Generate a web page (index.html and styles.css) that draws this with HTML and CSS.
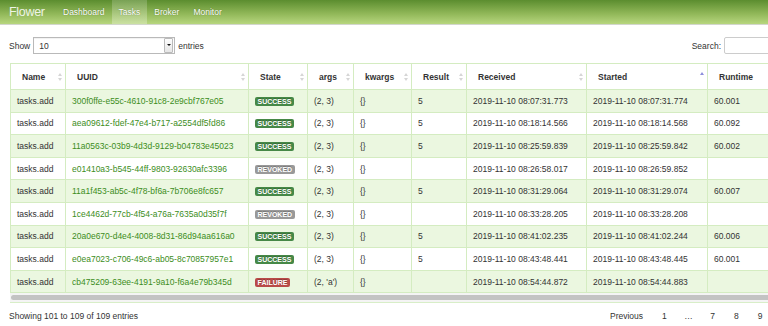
FILE: index.html
```html
<!DOCTYPE html>
<html>
<head>
  <title>Flower - Tasks</title>
  <link rel="stylesheet" href="styles.css">
</head>
<body>
  <div class="navbar">
    <span class="brand">Flower</span>
    <a class="nav-item">Dashboard</a>
    <a class="nav-item active">Tasks</a>
    <a class="nav-item">Broker</a>
    <a class="nav-item">Monitor</a>
  </div>

  <div class="page">
    <div class="controls">
      <div class="length">
        Show
        <span class="select"><span class="select-value">10</span><span class="select-arrow"></span></span>
        entries
      </div>
      <div class="search">
        Search:
        <span class="search-input"></span>
      </div>
    </div>

    <div class="table-wrap">
      <table class="tasks">
        <colgroup>
          <col style="width:55px">
          <col style="width:183px">
          <col style="width:59px">
          <col style="width:46px">
          <col style="width:58px">
          <col style="width:55px">
          <col style="width:120px">
          <col style="width:121px">
          <col style="width:108px">
        </colgroup>
        <thead>
          <tr>
            <th>Name<span class="sort"></span></th>
            <th>UUID<span class="sort"></span></th>
            <th>State<span class="sort"></span></th>
            <th>args<span class="sort"></span></th>
            <th>kwargs<span class="sort"></span></th>
            <th>Result<span class="sort"></span></th>
            <th>Received<span class="sort"></span></th>
            <th>Started<span class="sort asc"></span></th>
            <th>Runtime<span class="sort"></span></th>
          </tr>
        </thead>
        <tbody>
          <tr>
            <td>tasks.add</td>
            <td><a class="uuid">300f0ffe-e55c-4610-91c8-2e9cbf767e05</a></td>
            <td><span class="label success">SUCCESS</span></td>
            <td>(2, 3)</td><td>{}</td><td>5</td>
            <td>2019-11-10 08:07:31.773</td><td>2019-11-10 08:07:31.774</td><td>60.001</td>
          </tr>
          <tr>
            <td>tasks.add</td>
            <td><a class="uuid">aea09612-fdef-47e4-b717-a2554df5fd86</a></td>
            <td><span class="label success">SUCCESS</span></td>
            <td>(2, 3)</td><td>{}</td><td>5</td>
            <td>2019-11-10 08:18:14.566</td><td>2019-11-10 08:18:14.568</td><td>60.092</td>
          </tr>
          <tr>
            <td>tasks.add</td>
            <td><a class="uuid">11a0563c-03b9-4d3d-9129-b04783e45023</a></td>
            <td><span class="label success">SUCCESS</span></td>
            <td>(2, 3)</td><td>{}</td><td>5</td>
            <td>2019-11-10 08:25:59.839</td><td>2019-11-10 08:25:59.842</td><td>60.002</td>
          </tr>
          <tr>
            <td>tasks.add</td>
            <td><a class="uuid">e01410a3-b545-44ff-9803-92630afc3396</a></td>
            <td><span class="label revoked">REVOKED</span></td>
            <td>(2, 3)</td><td>{}</td><td></td>
            <td>2019-11-10 08:26:58.017</td><td>2019-11-10 08:26:59.852</td><td></td>
          </tr>
          <tr>
            <td>tasks.add</td>
            <td><a class="uuid">11a1f453-ab5c-4f78-bf6a-7b706e8fc657</a></td>
            <td><span class="label success">SUCCESS</span></td>
            <td>(2, 3)</td><td>{}</td><td>5</td>
            <td>2019-11-10 08:31:29.064</td><td>2019-11-10 08:31:29.074</td><td>60.007</td>
          </tr>
          <tr>
            <td>tasks.add</td>
            <td><a class="uuid">1ce4462d-77cb-4f54-a76a-7635a0d35f7f</a></td>
            <td><span class="label revoked">REVOKED</span></td>
            <td>(2, 3)</td><td>{}</td><td></td>
            <td>2019-11-10 08:33:28.205</td><td>2019-11-10 08:33:28.208</td><td></td>
          </tr>
          <tr>
            <td>tasks.add</td>
            <td><a class="uuid">20a0e670-d4e4-4008-8d31-86d94aa616a0</a></td>
            <td><span class="label success">SUCCESS</span></td>
            <td>(2, 3)</td><td>{}</td><td>5</td>
            <td>2019-11-10 08:41:02.235</td><td>2019-11-10 08:41:02.244</td><td>60.006</td>
          </tr>
          <tr>
            <td>tasks.add</td>
            <td><a class="uuid">e0ea7023-c706-49c6-ab05-8c70857957e1</a></td>
            <td><span class="label success">SUCCESS</span></td>
            <td>(2, 3)</td><td>{}</td><td>5</td>
            <td>2019-11-10 08:43:48.441</td><td>2019-11-10 08:43:48.445</td><td>60.001</td>
          </tr>
          <tr>
            <td>tasks.add</td>
            <td><a class="uuid">cb475209-63ee-4191-9a10-f6a4e79b345d</a></td>
            <td><span class="label failure">FAILURE</span></td>
            <td>(2, 'a')</td><td>{}</td><td></td>
            <td>2019-11-10 08:54:44.872</td><td>2019-11-10 08:54:44.883</td><td></td>
          </tr>
        </tbody>
      </table>
      <div class="scrollbar"><div class="thumb"></div></div>
    </div>

    <div class="footer">
      <span class="info">Showing 101 to 109 of 109 entries</span>
      <div class="pager">
        <a class="page-link">Previous</a>
        <a class="page-link">1</a>
        <span class="ellipsis">…</span>
        <a class="page-link">7</a>
        <a class="page-link">8</a>
        <a class="page-link">9</a>
      </div>
    </div>
  </div>
</body>
</html>
```

FILE: styles.css
```css
html, body {
  overflow: hidden;
}

body {
  margin: 0;
  width: 830px;
  font-family: "Liberation Sans", Arial, sans-serif;
  font-size: 8.5px;
  color: #333;
  background-color: #fff;
}

.navbar {
  display: flex;
  align-items: stretch;
  height: 24px;
  padding-left: 9px;
  background: linear-gradient(#5b8d2f, #8fb657 55%, #b7d67e);
  border-bottom: 1px solid #d2d6cc;
}

.brand {
  display: flex;
  align-items: center;
  width: 47px;
  font-size: 12.5px;
  color: #eef4e6;
  letter-spacing: -0.3px;
}

.nav-item {
  display: flex;
  align-items: center;
  padding: 0 7px;
  color: #fff;
  font-size: 8.5px;
  text-shadow: 0 0 1px rgba(40, 70, 10, 0.6);
}

.nav-item.active {
  background: linear-gradient(rgba(255, 255, 255, 0.18), rgba(255, 255, 255, 0.28));
}

.page {
  padding: 0 22px 0 9px;
}

.controls {
  display: flex;
  justify-content: space-between;
  align-items: center;
  margin-top: 12px;
  height: 17px;
}

.length, .search {
  display: flex;
  align-items: center;
  gap: 3px;
}

.select {
  display: flex;
  align-items: center;
  justify-content: space-between;
  width: 140px;
  height: 15px;
  border: 1px solid #b9b9b9;
  background-color: #fff;
  box-shadow: inset 0 1px 1px rgba(0, 0, 0, 0.06);
}

.select-value {
  padding-left: 5px;
}

.select-arrow {
  position: relative;
  width: 7px;
  height: 13px;
  margin-right: 1px;
  border: 1px solid #bbb;
  border-radius: 1px;
  background: linear-gradient(#fdfdfd, #e6e6e6);
}

.select-arrow::after {
  content: "";
  position: absolute;
  left: 1.5px;
  top: 5px;
  border-left: 2px solid transparent;
  border-right: 2px solid transparent;
  border-top: 2.5px solid #111;
}

.search-input {
  width: 82px;
  height: 15px;
  border: 1px solid #ccc;
  border-radius: 2px;
  background-color: #fff;
}

.table-wrap {
  margin-top: 9px;
  margin-left: 1px;
  border-bottom: 1px solid #d8eec8;
}

.tasks {
  table-layout: fixed;
  width: 805px;
  border-collapse: collapse;
  border: 1px solid #d4ecc1;
}

.tasks th, .tasks td {
  border: 1px solid #d4ecc1;
  text-align: left;
  white-space: nowrap;
  overflow: hidden;
}

.tasks th {
  position: relative;
  height: 25px;
  padding: 0 12px 0 11px;
  font-weight: bold;
  background-color: #fff;
}

.tasks td {
  height: 21.6px;
  padding: 0 6px;
}

.tasks tbody tr:nth-child(odd) td {
  background-color: #ebf7e0;
}

.sort {
  position: absolute;
  right: 5px;
  top: 9px;
  width: 0;
  height: 8px;
}

.sort::before, .sort::after {
  content: "";
  position: absolute;
  left: -2px;
  border-left: 2px solid transparent;
  border-right: 2px solid transparent;
}

.sort::before {
  top: 0;
  border-bottom: 3px solid #d6d6d6;
}

.sort::after {
  top: 4.5px;
  border-top: 3px solid #d6d6d6;
}

.sort.asc::before {
  top: -1px;
  border-bottom-color: #8d8fdc;
}

.sort.asc::after {
  display: none;
}

.uuid {
  color: #3c8d1c;
  text-decoration: none;
}

.label {
  display: inline-block;
  padding: 1px 2.5px;
  font-size: 7px;
  line-height: 7px;
  font-weight: bold;
  color: #fff;
  border-radius: 2px;
  text-shadow: 0 -1px 0 rgba(0, 0, 0, 0.25);
}

.label.success {
  background-color: #468847;
}

.label.revoked {
  background-color: #999;
}

.label.failure {
  background-color: #b94a48;
}

.scrollbar {
  height: 9px;
  padding: 2px 0 0 1px;
  box-sizing: border-box;
  background-color: #f4f4f4;
}

.thumb {
  height: 5px;
  border-radius: 3px;
  background-color: #c3c3c3;
}

.footer {
  display: flex;
  justify-content: space-between;
  align-items: center;
  margin-top: 8px;
}

.pager {
  display: flex;
  align-items: center;
  margin-right: 36px;
}

.page-link {
  margin: 0 9.5px;
  color: #333;
}

.ellipsis {
  margin: 0 8px;
}
```
